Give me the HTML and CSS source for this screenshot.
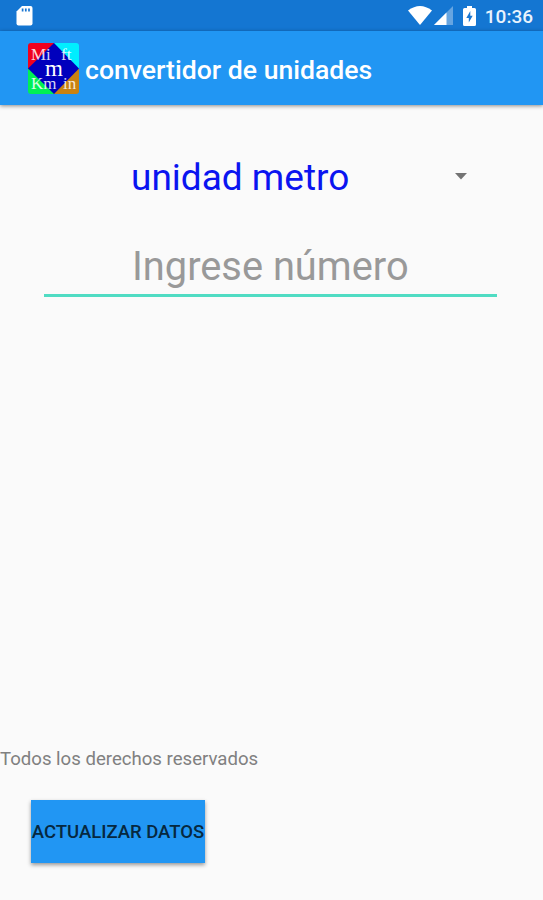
FILE: index.html
```
<!DOCTYPE html>
<html lang="es">
<head>
<meta charset="utf-8">
<title>convertidor de unidades</title>
<link rel="stylesheet" href="styles.css">
</head>
<body>
<div class="screen">
  <div class="status-bar">
    <svg class="sd-icon" width="18" height="20" viewBox="0 0 18 20"><path fill="#fff" d="M6 0H14.500Q16.500 0 16.500 2V17.500Q16.500 19.500 14.500 19.500H2.500Q.5 19.500 .5 17.500V5.500Z"/><path stroke="#1976d2" stroke-width="1.700" d="M6.600 2.500V5.500M9.800 2.500V5.500M13 2.500V5.500"/></svg>
    <div class="indicators">
      <svg class="wifi-icon" width="24" height="19" viewBox="0 0 24 19"><path fill="#fff" d="M0 4.500Q12-4.500 24 4.500L12 19Z"/></svg>
      <svg class="signal-icon" width="20" height="19" viewBox="0 0 20 19"><path fill="#fff" opacity=".35" d="M19 0V19H0Z"/><path fill="#fff" d="M12.500 6.500V19H0Z"/></svg>
      <svg class="battery-icon" width="13" height="20" viewBox="0 0 13 20"><path fill="#fff" d="M4 0H9V2H11.500Q13 2 13 3.500V18.500Q13 20 11.500 20H1.500Q0 20 0 18.500V3.500Q0 2 1.500 2H4Z"/><path fill="#1976d2" d="M7.300 5L3.300 12H5.800V16.500L9.700 9.800H7.300Z"/></svg>
      <span class="clock">10:36</span>
    </div>
  </div>
  <header class="app-bar">
    <svg class="app-logo" width="51" height="51" viewBox="0 0 51 51">
      <defs><clipPath id="tile"><rect width="51" height="51" rx="3"/></clipPath></defs>
      <g clip-path="url(#tile)">
        <path fill="#f0001e" d="M0 0H26V26H0Z"/><path fill="#00eeff" d="M26 0H51V26H26Z"/>
        <path fill="#00f055" d="M0 26H26V51H0Z"/><path fill="#c98212" d="M26 26H51V51H26Z"/>
        <path fill="#0000bd" d="M26 0L51 25.500L26 51L0 25.500Z"/>
      </g>
      <g class="logo-text"><text x="3" y="17">Mi</text><text x="33" y="17">ft</text><text x="3" y="46">Km</text><text x="35" y="46">in</text><text class="logo-main" x="26" y="33" text-anchor="middle">m</text></g>
    </svg>
    <h1 class="title">convertidor de unidades</h1>
  </header>
  <main class="content">
    <div class="spinner"><span class="unit">unidad metro</span><svg class="caret" width="12" height="7" viewBox="0 0 12 7"><path fill="#737373" d="M0 0H12L6 6.500Z"/></svg></div>
    <div class="field"><span class="hint">Ingrese número</span></div>
  </main>
  <footer class="footer">
    <p class="rights">Todos los derechos reservados</p>
    <button class="update">ACTUALIZAR DATOS</button>
  </footer>
</div>
</body>
</html>
```
FILE: styles.css
```
* { box-sizing: border-box; }
body { margin: 0; font-family: Roboto, "Liberation Sans", sans-serif; }
.screen { width: 543px; height: 900px; display: flex; flex-direction: column; background: #fafafa; overflow: hidden; }
svg { display: block; flex: none; }
.status-bar { height: 31px; flex: none; background: #1476d2; display: flex; justify-content: space-between; padding: 6px 10px 0 16px; }
.indicators { display: flex; align-items: flex-start; }
.signal-icon { margin-left: 2px; }
.battery-icon { margin-left: 9px; }
.clock { margin-left: 9px; font-size: 19px; font-weight: 500; line-height: 22px; color: #e9f3fd; white-space: nowrap; }
.app-bar { height: 74px; flex: none; background: #2196f3; display: flex; align-items: flex-start; padding: 12px 0 0 28px; box-shadow: 0 1px 4px rgba(0,0,0,.45); }
.logo-text { font-family: "Liberation Serif", serif; font-size: 17px; fill: #fff; fill-opacity: .85; }
.logo-main { font-size: 23px; fill-opacity: 1; }
.title { margin: 0 0 0 6px; font-size: 26.6px; font-weight: 500; line-height: 54px; color: #fff; white-space: nowrap; }
.content { flex: 1; padding: 42px 46px 0 44px; }
.spinner { height: 60px; display: flex; align-items: center; padding: 0 30px 0 87px; justify-content: space-between; }
.unit { padding-top: 2px; font-size: 37px; line-height: 60px; color: #0a14f0; white-space: nowrap; }
.caret { margin-top: -2px; }
.field { height: 90px; border-bottom: 3px solid #50dcc3; padding: 31px 0 0 88px; }
.hint { display: block; font-size: 39.8px; line-height: 58px; color: #999; white-space: nowrap; }
.footer { flex: none; height: 153px; }
.rights { margin: 0; line-height: 24px; font-size: 18.6px; color: #808080; white-space: nowrap; }
.update { display: flex; align-items: center; justify-content: center; width: 174px; height: 63px; margin: 29px 0 0 31px; padding: 0; border: 0; background: #2196f3; color: #06283f; font: 500 18.5px Roboto, sans-serif; white-space: nowrap; box-shadow: 0 2px 4px rgba(0,0,0,.4); }
```
